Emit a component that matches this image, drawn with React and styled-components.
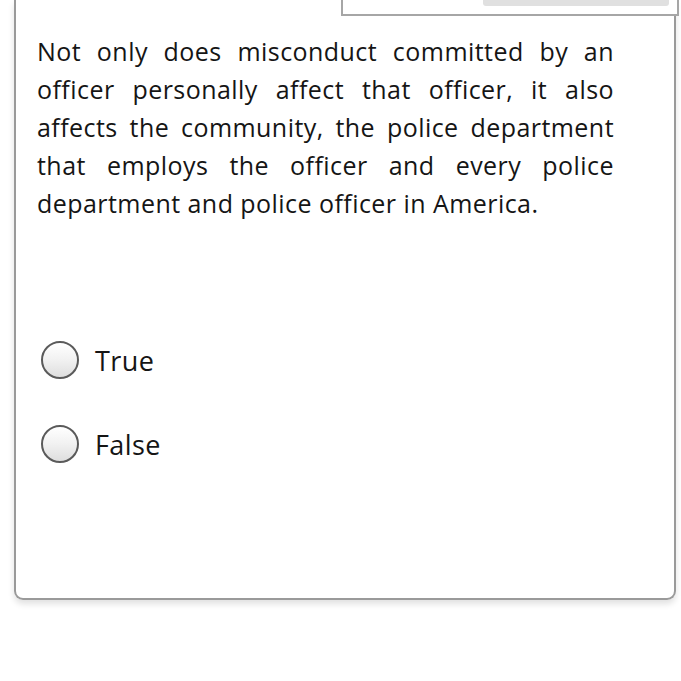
import React from "react"
import styled, { createGlobalStyle } from "styled-components"

const Global = createGlobalStyle`
  html, body {
    margin: 0;
    padding: 0;
    background: #ffffff;
  }
  body {
    font-family: "Open Sans", "Noto Sans", sans-serif;
    color: #151515;
  }
`

export default function App() {
  return (
    <>
      <Global />
      <Page>
        <Card>
          <Popover>
            <PopoverBar />
          </Popover>
          <Question>
            Not only does misconduct committed by an officer personally affect
            that officer, it also affects the community, the police department
            that employs the officer and every police department and police
            officer in America.
          </Question>
          <Options>
            <Option>
              <Radio type="radio" name="answer" />
              <span>True</span>
            </Option>
            <Option>
              <Radio type="radio" name="answer" />
              <span>False</span>
            </Option>
          </Options>
        </Card>
      </Page>
    </>
  )
}

const Page = styled.div`
  width: 681px;
  height: 681px;
  padding: 0 5px 0 14px;
  box-sizing: border-box;
`

const Card = styled.div`
  position: relative;
  height: 600px;
  box-sizing: border-box;
  border: 2px solid #9a9a9a;
  border-top: none;
  border-radius: 0 0 9px 9px;
  box-shadow: 0 4px 6px rgba(0, 0, 0, 0.12);
  padding: 32px 60px 0 21px;
`

const Popover = styled.div`
  position: absolute;
  top: 0;
  left: 325px;
  width: 338px;
  height: 16px;
  box-sizing: border-box;
  border: 2px solid #a6a6a6;
  border-top: none;
  background: #ffffff;
  display: flex;
  justify-content: flex-end;
  padding-right: 8px;
`

const PopoverBar = styled.div`
  width: 186px;
  height: 6px;
  background: #e0e0e0;
  border-radius: 0 0 3px 3px;
`

const Question = styled.p`
  margin: 0;
  font-size: 25px;
  line-height: 38px;
  letter-spacing: 0.45px;
  text-align: justify;
`

const Options = styled.div`
  display: flex;
  flex-direction: column;
  gap: 46px;
  margin-top: 119px;
  padding-left: 4px;
`

const Option = styled.label`
  display: flex;
  align-items: center;
  gap: 16px;
  font-size: 27px;
  letter-spacing: 0.4px;
  height: 38px;
`

const Radio = styled.input`
  appearance: none;
  margin: 0;
  width: 38px;
  height: 38px;
  border-radius: 50%;
  border: 2px solid #5a5a5a;
  box-sizing: border-box;
  background: linear-gradient(180deg, #ffffff 0%, #f1f1f1 50%, #dedede 100%);
`
